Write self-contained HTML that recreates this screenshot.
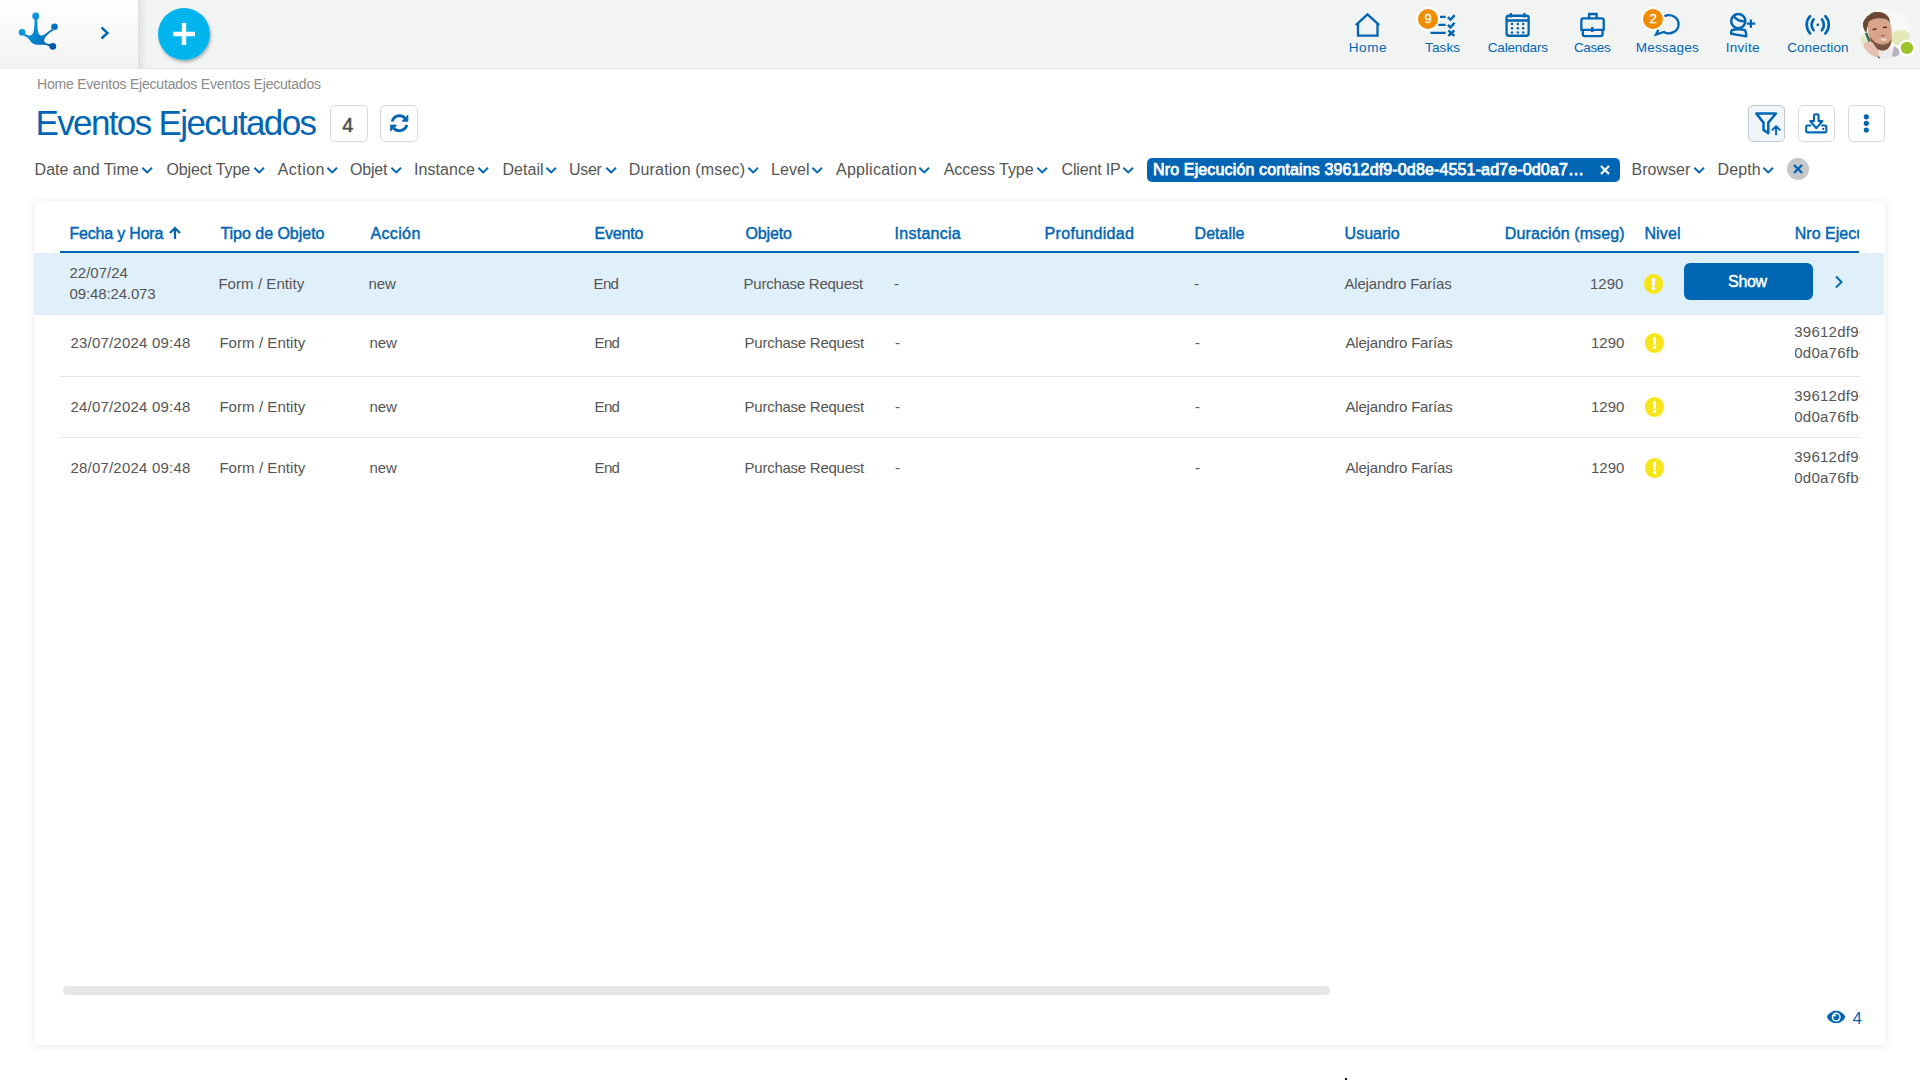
<!DOCTYPE html>
<html><head><meta charset="utf-8">
<style>
*{box-sizing:border-box;margin:0;padding:0}
html,body{width:1920px;height:1080px;overflow:hidden;background:#fff;font-family:"Liberation Sans",sans-serif;color:#555}
.abs{position:absolute}
.tx{position:absolute;white-space:nowrap}
#hdr{position:absolute;left:0;top:0;width:1920px;height:69px;background:#f2f3f3;border-bottom:1px solid #dde1e6}
#lp{position:absolute;left:0;top:0;width:138px;height:69px;background:linear-gradient(#ffffff,#f1f2f2)}
#fab{position:absolute;left:158px;top:8px;width:52px;height:52px;border-radius:50%;background:#00b4ec;box-shadow:1px 2px 3px rgba(0,0,0,.3)}
.nav svg{position:absolute}
.badge{position:absolute;width:24px;height:24px;border-radius:50%;background:#ef8c00;border:2px solid #fff;color:#fff;font-size:13px;text-align:center;line-height:20px;-webkit-text-stroke:0.3px #fff}
.ob{position:absolute;top:105px;width:37px;height:37px;border:1px solid #d7d9dc;border-radius:5px;background:#fff}
#card{position:absolute;left:35px;top:201px;width:1850px;height:844px;background:#fff;box-shadow:0 1px 8px rgba(0,0,0,.1)}
.rl{position:absolute;left:60px;width:1800px;height:1px;background:#e6e6e6}
.warn{position:absolute;width:19.6px;height:19.6px;border-radius:50%;background:#f6e51a}
.warn:before{content:"";position:absolute;left:8.3px;top:4px;width:3px;height:7.7px;background:#fff}
.warn:after{content:"";position:absolute;left:8.3px;top:13px;width:3px;height:3px;background:#fff}
.clip{position:absolute;overflow:hidden;white-space:nowrap}
</style></head><body>
<div id="hdr"></div>
<div id="lp"></div>
<div class="abs" style="left:138px;top:0;width:9px;height:68px;background:linear-gradient(90deg,rgba(0,0,0,0.075),rgba(0,0,0,0))"></div>
<!-- avatar bg + status -->
<div class="badge" style="left:1416px;top:7px">9</div>
<div class="badge" style="left:1641px;top:7px">2</div>
<div class="ob" style="left:330px;width:38px"></div>
<div class="ob" style="left:380px;width:38px"></div>
<div class="ob" style="left:1748px;background:#eef6fc;border-color:#c4c8cc"></div>
<div class="ob" style="left:1798px"></div>
<div class="ob" style="left:1848px"></div>
<!-- chip -->
<div class="abs" style="left:1147px;top:158px;width:473px;height:24px;border-radius:5px;background:#0066b3"></div>
<svg class="abs" style="left:1600px;top:165px" width="10" height="10" viewBox="0 0 10 10"><path d="M1 1l8 8M9 1l-8 8" stroke="#fff" stroke-width="2.2"/></svg>
<div class="abs" style="left:1787px;top:158px;width:22px;height:22px;border-radius:50%;background:#c6c7c9"></div>
<svg class="abs" style="left:1793px;top:164px" width="10" height="10" viewBox="0 0 10 10"><path d="M1 1l8 8M9 1l-8 8" stroke="#0066b3" stroke-width="2.4"/></svg>
<svg class="abs" style="left:141.1px;top:166px" width="13" height="9" viewBox="0 0 13 9"><path d="M1.4 1.7L6.2 6.4L11 1.7" fill="none" stroke="#0066b3" stroke-width="1.9"/></svg>
<svg class="abs" style="left:252.6px;top:166px" width="13" height="9" viewBox="0 0 13 9"><path d="M1.4 1.7L6.2 6.4L11 1.7" fill="none" stroke="#0066b3" stroke-width="1.9"/></svg>
<svg class="abs" style="left:325.6px;top:166px" width="13" height="9" viewBox="0 0 13 9"><path d="M1.4 1.7L6.2 6.4L11 1.7" fill="none" stroke="#0066b3" stroke-width="1.9"/></svg>
<svg class="abs" style="left:390.1px;top:166px" width="13" height="9" viewBox="0 0 13 9"><path d="M1.4 1.7L6.2 6.4L11 1.7" fill="none" stroke="#0066b3" stroke-width="1.9"/></svg>
<svg class="abs" style="left:477.1px;top:166px" width="13" height="9" viewBox="0 0 13 9"><path d="M1.4 1.7L6.2 6.4L11 1.7" fill="none" stroke="#0066b3" stroke-width="1.9"/></svg>
<svg class="abs" style="left:545.1px;top:166px" width="13" height="9" viewBox="0 0 13 9"><path d="M1.4 1.7L6.2 6.4L11 1.7" fill="none" stroke="#0066b3" stroke-width="1.9"/></svg>
<svg class="abs" style="left:604.6px;top:166px" width="13" height="9" viewBox="0 0 13 9"><path d="M1.4 1.7L6.2 6.4L11 1.7" fill="none" stroke="#0066b3" stroke-width="1.9"/></svg>
<svg class="abs" style="left:746.9px;top:166px" width="13" height="9" viewBox="0 0 13 9"><path d="M1.4 1.7L6.2 6.4L11 1.7" fill="none" stroke="#0066b3" stroke-width="1.9"/></svg>
<svg class="abs" style="left:811.1px;top:166px" width="13" height="9" viewBox="0 0 13 9"><path d="M1.4 1.7L6.2 6.4L11 1.7" fill="none" stroke="#0066b3" stroke-width="1.9"/></svg>
<svg class="abs" style="left:918.1px;top:166px" width="13" height="9" viewBox="0 0 13 9"><path d="M1.4 1.7L6.2 6.4L11 1.7" fill="none" stroke="#0066b3" stroke-width="1.9"/></svg>
<svg class="abs" style="left:1036.1px;top:166px" width="13" height="9" viewBox="0 0 13 9"><path d="M1.4 1.7L6.2 6.4L11 1.7" fill="none" stroke="#0066b3" stroke-width="1.9"/></svg>
<svg class="abs" style="left:1122.1px;top:166px" width="13" height="9" viewBox="0 0 13 9"><path d="M1.4 1.7L6.2 6.4L11 1.7" fill="none" stroke="#0066b3" stroke-width="1.9"/></svg>
<svg class="abs" style="left:1693.1px;top:166px" width="13" height="9" viewBox="0 0 13 9"><path d="M1.4 1.7L6.2 6.4L11 1.7" fill="none" stroke="#0066b3" stroke-width="1.9"/></svg>
<svg class="abs" style="left:1761.9px;top:166px" width="13" height="9" viewBox="0 0 13 9"><path d="M1.4 1.7L6.2 6.4L11 1.7" fill="none" stroke="#0066b3" stroke-width="1.9"/></svg>


<div id="card"></div>
<div class="abs" style="left:34px;top:253px;width:1850px;height:62px;background:#e0f0fa"></div>
<div class="abs" style="left:60px;top:251px;width:1799px;height:2px;background:#0066b3"></div>
<div class="rl" style="top:376px"></div>
<div class="rl" style="top:437px"></div>
<svg class="abs" style="left:168px;top:226px" width="14" height="14" viewBox="0 0 14 14"><path d="M7 13V2M2 7l5-5 5 5" fill="none" stroke="#0066b3" stroke-width="2.2"/></svg>
<div class="warn" style="left:1643.5px;top:274px"></div>
<div class="warn" style="left:1644.5px;top:333px"></div>
<div class="warn" style="left:1644.5px;top:397px"></div>
<div class="warn" style="left:1644.5px;top:458px"></div>
<div class="abs" style="left:1684px;top:263px;width:129px;height:37px;border-radius:6px;background:#0066b3"></div>
<svg class="abs" style="left:1834px;top:275px" width="10" height="14" viewBox="0 0 10 14"><path d="M2 1.5L7.5 7 2 12.5" fill="none" stroke="#0066b3" stroke-width="2"/></svg>
<div class="abs" style="left:63px;top:986px;width:1267px;height:9px;border-radius:4.5px;background:#e5e6e7"></div>
<svg class="abs" style="left:1820px;top:1000px" width="30" height="30" viewBox="1820 1000 30 30"><path d="M1826.8 1017C1829.3 1012.4 1832.8 1010.8 1836.1 1010.8C1839.4 1010.8 1842.9 1012.4 1845.4 1017C1842.9 1021.6 1839.4 1023.2 1836.1 1023.2C1832.8 1023.2 1829.3 1021.6 1826.8 1017Z" fill="#0066b3"/><circle cx="1836.2" cy="1017.1" r="4.5" fill="#fff"/><circle cx="1836.2" cy="1017.1" r="3.1" fill="#0066b3"/><circle cx="1834.5" cy="1015.4" r="1.2" fill="#fff"/></svg>
<div class="abs" style="left:1345px;top:1078px;width:2px;height:2px;background:#111"></div>
<!-- clipped texts -->
<div class="clip" style="left:1795px;top:220px;width:64px;height:30px"><div class="tx" style="left:-0.2px;top:5.8px;font-size:16px;line-height:16px;-webkit-text-stroke:0.45px #0066b3;color:#0066b3;letter-spacing:0px">Nro Ejecución</div></div>
<div class="clip" style="left:1795px;top:320px;width:65px;height:45px"><div class="tx" style="left:-0.8px;top:0.5px;font-size:15px;line-height:21px;color:#555;letter-spacing:0.26px">39612df9-<br>0d0a76fb-</div></div>
<div class="clip" style="left:1795px;top:384px;width:65px;height:45px"><div class="tx" style="left:-0.8px;top:0.5px;font-size:15px;line-height:21px;color:#555;letter-spacing:0.26px">39612df9-<br>0d0a76fb-</div></div>
<div class="clip" style="left:1795px;top:445px;width:65px;height:45px"><div class="tx" style="left:-0.8px;top:0.5px;font-size:15px;line-height:21px;color:#555;letter-spacing:0.26px">39612df9-<br>0d0a76fb-</div></div>
<div class="tx" style="left:37.00px;top:77.10px;font-size:14px;line-height:14px;color:#8a8a8a;letter-spacing:-0.210px">Home Eventos Ejecutados Eventos Ejecutados</div>
<div class="tx" style="left:35.50px;top:105.25px;font-size:35px;line-height:35px;color:#0066b3;letter-spacing:-1.639px">Eventos Ejecutados</div>
<div class="tx" style="left:1348.70px;top:40.52px;font-size:13.5px;line-height:13.5px;color:#0066b3;letter-spacing:0.599px">Home</div>
<div class="tx" style="left:1425.00px;top:40.52px;font-size:13.5px;line-height:13.5px;color:#0066b3;letter-spacing:0.135px">Tasks</div>
<div class="tx" style="left:1487.70px;top:40.52px;font-size:13.5px;line-height:13.5px;color:#0066b3;letter-spacing:-0.148px">Calendars</div>
<div class="tx" style="left:1574.00px;top:40.52px;font-size:13.5px;line-height:13.5px;color:#0066b3;letter-spacing:-0.379px">Cases</div>
<div class="tx" style="left:1635.70px;top:40.52px;font-size:13.5px;line-height:13.5px;color:#0066b3;letter-spacing:0.217px">Messages</div>
<div class="tx" style="left:1725.70px;top:40.52px;font-size:13.5px;line-height:13.5px;color:#0066b3;letter-spacing:0.308px">Invite</div>
<div class="tx" style="left:1787.20px;top:40.52px;font-size:13.5px;line-height:13.5px;color:#0066b3;letter-spacing:0.065px">Conection</div>
<div class="tx" style="left:34.60px;top:161.80px;font-size:16px;line-height:16px;color:#555555">Date and Time</div>
<div class="tx" style="left:166.50px;top:161.80px;font-size:16px;line-height:16px;color:#555555;letter-spacing:-0.148px">Object Type</div>
<div class="tx" style="left:277.70px;top:161.80px;font-size:16px;line-height:16px;color:#555555;letter-spacing:0.446px">Action</div>
<div class="tx" style="left:350.00px;top:161.80px;font-size:16px;line-height:16px;color:#555555;letter-spacing:-0.199px">Objet</div>
<div class="tx" style="left:414.00px;top:161.80px;font-size:16px;line-height:16px;color:#555555;letter-spacing:0.059px">Instance</div>
<div class="tx" style="left:502.50px;top:161.80px;font-size:16px;line-height:16px;color:#555555;letter-spacing:0.030px">Detail</div>
<div class="tx" style="left:569.00px;top:161.80px;font-size:16px;line-height:16px;color:#555555;letter-spacing:-0.318px">User</div>
<div class="tx" style="left:628.80px;top:161.80px;font-size:16px;line-height:16px;color:#555555;letter-spacing:0.180px">Duration (msec)</div>
<div class="tx" style="left:771.00px;top:161.80px;font-size:16px;line-height:16px;color:#555555;letter-spacing:0.076px">Level</div>
<div class="tx" style="left:836.00px;top:161.80px;font-size:16px;line-height:16px;color:#555555;letter-spacing:0.263px">Application</div>
<div class="tx" style="left:943.75px;top:161.80px;font-size:16px;line-height:16px;color:#555555;letter-spacing:-0.055px">Access Type</div>
<div class="tx" style="left:1061.50px;top:161.80px;font-size:16px;line-height:16px;color:#555555;letter-spacing:-0.162px">Client IP</div>
<div class="tx" style="left:1631.50px;top:161.80px;font-size:16px;line-height:16px;color:#555555;letter-spacing:0.025px">Browser</div>
<div class="tx" style="left:1717.60px;top:161.80px;font-size:16px;line-height:16px;color:#555555;letter-spacing:0.101px">Depth</div>
<div class="tx" style="left:1153.00px;top:162.40px;font-size:16px;line-height:16px;color:#fff;-webkit-text-stroke:0.75px #fff;letter-spacing:0.146px">Nro Ejecución contains 39612df9-0d8e-4551-ad7e-0d0a7…</div>
<div class="tx" style="left:69.40px;top:225.80px;font-size:16px;line-height:16px;color:#0066b3;-webkit-text-stroke:0.45px #0066b3;letter-spacing:-0.186px">Fecha y Hora</div>
<div class="tx" style="left:220.40px;top:225.80px;font-size:16px;line-height:16px;color:#0066b3;-webkit-text-stroke:0.45px #0066b3;letter-spacing:-0.020px">Tipo de Objeto</div>
<div class="tx" style="left:370.40px;top:225.80px;font-size:16px;line-height:16px;color:#0066b3;-webkit-text-stroke:0.45px #0066b3;letter-spacing:0.375px">Acción</div>
<div class="tx" style="left:594.60px;top:225.80px;font-size:16px;line-height:16px;color:#0066b3;-webkit-text-stroke:0.45px #0066b3;letter-spacing:-0.203px">Evento</div>
<div class="tx" style="left:745.60px;top:225.80px;font-size:16px;line-height:16px;color:#0066b3;-webkit-text-stroke:0.45px #0066b3;letter-spacing:-0.188px">Objeto</div>
<div class="tx" style="left:894.60px;top:225.80px;font-size:16px;line-height:16px;color:#0066b3;-webkit-text-stroke:0.45px #0066b3;letter-spacing:0.257px">Instancia</div>
<div class="tx" style="left:1044.60px;top:225.80px;font-size:16px;line-height:16px;color:#0066b3;-webkit-text-stroke:0.45px #0066b3;letter-spacing:0.301px">Profundidad</div>
<div class="tx" style="left:1194.60px;top:225.80px;font-size:16px;line-height:16px;color:#0066b3;-webkit-text-stroke:0.45px #0066b3;letter-spacing:0.016px">Detalle</div>
<div class="tx" style="left:1344.60px;top:225.80px;font-size:16px;line-height:16px;color:#0066b3;-webkit-text-stroke:0.45px #0066b3;letter-spacing:-0.006px">Usuario</div>
<div class="tx" style="left:1504.80px;top:225.80px;font-size:16px;line-height:16px;color:#0066b3;-webkit-text-stroke:0.45px #0066b3;letter-spacing:0.105px">Duración (mseg)</div>
<div class="tx" style="left:1644.40px;top:225.80px;font-size:16px;line-height:16px;color:#0066b3;-webkit-text-stroke:0.45px #0066b3;letter-spacing:0.148px">Nivel</div>
<div class="tx" style="left:69.50px;top:265.05px;font-size:15px;line-height:15px;color:#555555">22/07/24</div>
<div class="tx" style="left:69.50px;top:286.05px;font-size:15px;line-height:15px;color:#555555;letter-spacing:-0.131px">09:48:24.073</div>
<div class="tx" style="left:218.40px;top:276.45px;font-size:15px;line-height:15px;color:#555555;letter-spacing:0.066px">Form / Entity</div>
<div class="tx" style="left:368.40px;top:276.45px;font-size:15px;line-height:15px;color:#555555">new</div>
<div class="tx" style="left:593.60px;top:276.45px;font-size:15px;line-height:15px;color:#555555;letter-spacing:-0.674px">End</div>
<div class="tx" style="left:743.60px;top:276.45px;font-size:15px;line-height:15px;color:#555555;letter-spacing:-0.256px">Purchase Request</div>
<div class="tx" style="left:894.00px;top:276.45px;font-size:15px;line-height:15px;color:#555555">-</div>
<div class="tx" style="left:1194.00px;top:276.45px;font-size:15px;line-height:15px;color:#555555">-</div>
<div class="tx" style="left:1344.50px;top:276.45px;font-size:15px;line-height:15px;color:#555555;letter-spacing:-0.190px">Alejandro Farías</div>
<div class="tx" style="left:1590.00px;top:276.45px;font-size:15px;line-height:15px;color:#555555;letter-spacing:-0.009px">1290</div>
<div class="tx" style="left:70.40px;top:335.25px;font-size:15px;line-height:15px;color:#555555;letter-spacing:0.211px">23/07/2024 09:48</div>
<div class="tx" style="left:219.40px;top:335.25px;font-size:15px;line-height:15px;color:#555555;letter-spacing:0.066px">Form / Entity</div>
<div class="tx" style="left:369.40px;top:335.25px;font-size:15px;line-height:15px;color:#555555">new</div>
<div class="tx" style="left:594.60px;top:335.25px;font-size:15px;line-height:15px;color:#555555;letter-spacing:-0.674px">End</div>
<div class="tx" style="left:744.60px;top:335.25px;font-size:15px;line-height:15px;color:#555555;letter-spacing:-0.256px">Purchase Request</div>
<div class="tx" style="left:895.00px;top:335.25px;font-size:15px;line-height:15px;color:#555555">-</div>
<div class="tx" style="left:1195.00px;top:335.25px;font-size:15px;line-height:15px;color:#555555">-</div>
<div class="tx" style="left:1345.50px;top:335.25px;font-size:15px;line-height:15px;color:#555555;letter-spacing:-0.190px">Alejandro Farías</div>
<div class="tx" style="left:1591.00px;top:335.25px;font-size:15px;line-height:15px;color:#555555;letter-spacing:-0.009px">1290</div>
<div class="tx" style="left:70.40px;top:399.25px;font-size:15px;line-height:15px;color:#555555;letter-spacing:0.211px">24/07/2024 09:48</div>
<div class="tx" style="left:219.40px;top:399.25px;font-size:15px;line-height:15px;color:#555555;letter-spacing:0.066px">Form / Entity</div>
<div class="tx" style="left:369.40px;top:399.25px;font-size:15px;line-height:15px;color:#555555">new</div>
<div class="tx" style="left:594.60px;top:399.25px;font-size:15px;line-height:15px;color:#555555;letter-spacing:-0.674px">End</div>
<div class="tx" style="left:744.60px;top:399.25px;font-size:15px;line-height:15px;color:#555555;letter-spacing:-0.256px">Purchase Request</div>
<div class="tx" style="left:895.00px;top:399.25px;font-size:15px;line-height:15px;color:#555555">-</div>
<div class="tx" style="left:1195.00px;top:399.25px;font-size:15px;line-height:15px;color:#555555">-</div>
<div class="tx" style="left:1345.50px;top:399.25px;font-size:15px;line-height:15px;color:#555555;letter-spacing:-0.190px">Alejandro Farías</div>
<div class="tx" style="left:1591.00px;top:399.25px;font-size:15px;line-height:15px;color:#555555;letter-spacing:-0.009px">1290</div>
<div class="tx" style="left:70.40px;top:460.25px;font-size:15px;line-height:15px;color:#555555;letter-spacing:0.211px">28/07/2024 09:48</div>
<div class="tx" style="left:219.40px;top:460.25px;font-size:15px;line-height:15px;color:#555555;letter-spacing:0.066px">Form / Entity</div>
<div class="tx" style="left:369.40px;top:460.25px;font-size:15px;line-height:15px;color:#555555">new</div>
<div class="tx" style="left:594.60px;top:460.25px;font-size:15px;line-height:15px;color:#555555;letter-spacing:-0.674px">End</div>
<div class="tx" style="left:744.60px;top:460.25px;font-size:15px;line-height:15px;color:#555555;letter-spacing:-0.256px">Purchase Request</div>
<div class="tx" style="left:895.00px;top:460.25px;font-size:15px;line-height:15px;color:#555555">-</div>
<div class="tx" style="left:1195.00px;top:460.25px;font-size:15px;line-height:15px;color:#555555">-</div>
<div class="tx" style="left:1345.50px;top:460.25px;font-size:15px;line-height:15px;color:#555555;letter-spacing:-0.190px">Alejandro Farías</div>
<div class="tx" style="left:1591.00px;top:460.25px;font-size:15px;line-height:15px;color:#555555;letter-spacing:-0.009px">1290</div>
<div class="tx" style="left:1728.00px;top:273.90px;font-size:16px;line-height:16px;color:#fff;-webkit-text-stroke:0.45px #fff;letter-spacing:-0.290px">Show</div>
<div class="tx" style="left:342.20px;top:114.80px;font-size:20px;line-height:20px;color:#4a4a4a;-webkit-text-stroke:0.45px #4a4a4a">4</div>
<div class="tx" style="left:1852.40px;top:1010.05px;font-size:17px;line-height:17px;color:#0066b3">4</div>
<svg class="abs" style="left:0;top:0;pointer-events:none" width="1920" height="1080" viewBox="0 0 1920 1080">
<defs>
<linearGradient id="lg" x1="20" y1="20" x2="56" y2="46" gradientUnits="userSpaceOnUse"><stop offset="0" stop-color="#12a6ea"/><stop offset="0.5" stop-color="#0384d0"/><stop offset="1" stop-color="#0052a5"/></linearGradient>
<filter id="avb" x="1850" y="0" width="70" height="70" filterUnits="userSpaceOnUse"><feGaussianBlur stdDeviation="0.5"/></filter>
<clipPath id="avc"><circle cx="1885" cy="34" r="25"/></clipPath>
<filter id="fsh" x="-20%" y="-20%" width="150%" height="150%"><feDropShadow dx="1" dy="2" stdDeviation="1.5" flood-color="#000" flood-opacity="0.3"/></filter>
</defs>
<!-- logo -->
<g fill="url(#lg)">
<circle cx="35.7" cy="16.1" r="3.5"/>
<circle cx="22.1" cy="32.3" r="3.4"/>
<circle cx="54.5" cy="26.7" r="3.3"/>
<circle cx="52.8" cy="46.3" r="3.4"/>
<path d="M24.6 33.2C27 35.6 29.5 36 31.2 35.2C33.6 34 34.2 30 34.4 24L34.6 18.5L37.3 18.5C37.5 26 37.5 31 38.8 34C40 35.8 42 36 44.5 34.5L51.5 29.3L53.6 30.2C49 32.5 45.5 36 44.2 39.5C43.5 42 46 43.8 49 43.9L51.5 44.3L50.8 47.6C48.5 45.5 46.5 44.8 44 44.7L38 44.8C34 44.8 32 43.5 30 40.5C28.5 38 27 36.6 24 35.9Z"/>
</g>
<path d="M101.5 27.5L107.5 33L101.5 38.5" fill="none" stroke="#0066b3" stroke-width="2.4"/>
<!-- fab -->
<circle cx="184" cy="34" r="26" fill="#00b5ee" filter="url(#fsh)"/>
<path d="M184 23v22M173 34h22" stroke="#fff" stroke-width="4.4"/>

<!-- nav icons -->
<g fill="none" stroke="#0066b3" stroke-width="2.3">
<!-- home -->
<path d="M1355.8 25.2L1367.5 14.3L1379.2 25.2" stroke-linejoin="miter"/>
<path d="M1358 23V35.7H1377.5V23"/>
<!-- tasks -->
<path d="M1440 16.9H1445.7M1438.3 24.9H1445.7M1430.5 32.9H1445.7"/>
<path d="M1447.9 17.2L1450.5 19.7L1454.6 15.1M1447.9 24.9L1450.5 27.4L1454.6 22.8" stroke-width="2.4"/>
<path d="M1449.3 31.3L1453.4 35.1M1453.4 31.3L1449.3 35.1" stroke-width="2.5" stroke-linecap="square"/>
<!-- calendar -->
<rect x="1506.55" y="15.75" width="22.1" height="20" rx="2.2"/>
<path d="M1506.5 20.5H1528.6" stroke-width="2.6"/>
<path d="M1510.9 12.9V17.5M1524.4 12.9V17.5"/>
<!-- briefcase -->
<path d="M1583.4 18.35H1601.7Q1603.75 18.35 1603.75 20.4V29.8H1581.35V20.4Q1581.35 18.35 1583.4 18.35Z"/>
<path d="M1582.8 29.8V34Q1582.8 36.05 1584.8 36.05H1600.6Q1602.6 36.05 1602.6 34V29.8"/>
<path d="M1589.1 18.3V14H1596.6V18.3"/>
<path d="M1592.3 27V32" stroke-width="2.4"/>
<!-- messages bubble -->
<path d="M1664.4 16.3A9.6 9 0 1 1 1664 31.9L1656 34.6L1658.4 29.8" stroke-linejoin="miter"/>
<!-- invite -->
<circle cx="1738.3" cy="21.15" r="7.1" stroke-width="2.5"/>
<path d="M1733.5 15.8C1735.5 19.5 1740.5 21.7 1745.3 21.3" stroke-width="2.4"/>
<path d="M1731.8 30.2C1736 29 1740.5 29 1745 30.2C1746 31.8 1746.3 33.8 1746.3 36.2C1741.2 35.6 1736.2 34.6 1731.2 33.8C1731 32.6 1731.2 31.3 1731.8 30.2Z" stroke-width="2.4" stroke-linejoin="round"/>
<path d="M1747 23.6H1755.3M1750.9 19.6V27.7" stroke-width="2.3"/>
<!-- connection -->
<g stroke-width="2.7" stroke-linecap="round">
<path d="M1810.1 16.2C1805.6 21 1805.6 28.6 1810.1 33.4"/>
<path d="M1813.6 19.4C1810.9 22.4 1810.9 27.2 1813.6 30.2"/>
<path d="M1821.9 19.4C1824.6 22.4 1824.6 27.2 1821.9 30.2"/>
<path d="M1825.4 16.2C1829.9 21 1829.9 28.6 1825.4 33.4"/>
</g>
</g>
<g fill="#0066b3">
<circle cx="1512" cy="24" r="1.25"/><circle cx="1517.8" cy="24" r="1.25"/><circle cx="1523.2" cy="24" r="1.25"/>
<circle cx="1512" cy="28.3" r="1.25"/><circle cx="1517.8" cy="28.3" r="1.25"/><circle cx="1523.2" cy="28.3" r="1.25"/>
<circle cx="1512" cy="32.6" r="1.25"/><circle cx="1517.8" cy="32.6" r="1.25"/><circle cx="1523.2" cy="32.6" r="1.25"/>
<circle cx="1817.8" cy="24.8" r="1.4"/>
</g>

<!-- avatar -->
<g clip-path="url(#avc)"><g filter="url(#avb)">
<rect x="1858" y="7" width="56" height="56" fill="#f8f8f6"/>
<ellipse cx="1901" cy="38" rx="10" ry="8" fill="#e3e8b8"/>
<ellipse cx="1863" cy="44" rx="4" ry="9" fill="#e4e8c0"/>
<path d="M1876 50L1900 49L1902 60L1874 60Z" fill="#ecebec"/>
<path d="M1894 46L1900 50L1898 58L1892 56Z" fill="#b4b2bc"/>
<path d="M1877 53L1881 60L1875 60Z" fill="#2e2e2e"/>
<path d="M1863 23C1864 17 1869 12.5 1875 12C1881 11.5 1887 13 1889.5 19L1890 25C1886 19 1878 18 1871 21C1868 23 1867 28 1866.5 33C1864.5 31 1862.5 27 1863 23Z" fill="#694632"/>
<path d="M1868.5 22C1872 18 1880 17 1887 19.5C1891 22 1892 30 1891.8 38C1891.5 45 1889 50 1883 50.5C1876 51 1871 46 1869.5 40C1868 34 1867.5 27 1868.5 22Z" fill="#d9a48b"/>
<path d="M1870 37C1871 44 1875 50 1882 50.5C1888 51 1891 46 1891.8 39C1890 42 1887 44.5 1883 44.5C1878 44.5 1874 42 1872 39Z" fill="#7a5242"/>
<ellipse cx="1883.5" cy="39.6" rx="3.2" ry="1.2" fill="#eedbd2"/>
<ellipse cx="1884" cy="43.8" rx="2.2" ry="1" fill="#9aa060"/>
<path d="M1872.5 29.8L1876.5 28.8M1883 27.6L1887 27.2" stroke="#4a2e22" stroke-width="1.5"/>
<path d="M1881 35.5C1882 36 1883.5 36 1884.5 35.3" stroke="#8a5a48" stroke-width="1.2" fill="none"/>
<path d="M1864 44C1866 41 1870 41 1873 43L1879 52L1878 59L1868 59C1865 55 1863 49 1864 44Z" fill="#e7c0ae"/>
<path d="M1866 33L1869.5 41.5" stroke="#3b6a52" stroke-width="2.6"/>
</g></g>
<circle cx="1907" cy="47.9" r="8.5" fill="#fff"/>
<circle cx="1907" cy="47.9" r="6.2" fill="#9cc42a"/>
<!-- refresh -->
<g fill="none" stroke="#0066b3" stroke-width="2.9">
<path d="M392.3 121.3A7.45 7.45 0 0 1 405.2 118.4"/>
<path d="M406.76 124.9A7.45 7.45 0 0 1 393.8 128"/>
</g>
<g fill="#0066b3" stroke="#0066b3" stroke-width="0.8" stroke-linejoin="round">
<path d="M407.9 115.1V121.3H402.1Z"/>
<path d="M390.6 131.1V125.1H396.6Z"/>
</g>
<!-- action icons -->
<g fill="none" stroke="#0066b3" stroke-width="2.5" stroke-linejoin="round">
<path d="M1756.3 113.5H1775.9L1768.3 122.6V133.2L1763.5 129.9V122.6Z"/>
<path d="M1776.1 135.3V126.4M1771.9 130.4L1776.1 126.2L1780.3 130.4" stroke-width="2"/>
<path d="M1811.2 125.55H1807.6Q1806.15 125.55 1806.15 127V131Q1806.15 132.4 1807.6 132.4H1824.9Q1826.35 132.4 1826.35 131V127Q1826.35 125.55 1824.9 125.55H1821.4" stroke-width="2.1"/>
<path d="M1814 121.1V115.6Q1814 114.2 1815.4 114.2H1817.2Q1818.6 114.2 1818.6 115.6V121.1H1822.4L1816.3 128.2L1810.2 121.1Z" stroke-width="2.1"/>
</g>
<rect x="1822.2" y="128" width="2.1" height="2.1" rx="0.5" fill="#0066b3"/>
<g fill="#0066b3"><circle cx="1866.3" cy="116.8" r="2.6"/><circle cx="1866.3" cy="123.3" r="2.6"/><circle cx="1866.3" cy="130" r="2.6"/></g>
</svg>

</body></html>
